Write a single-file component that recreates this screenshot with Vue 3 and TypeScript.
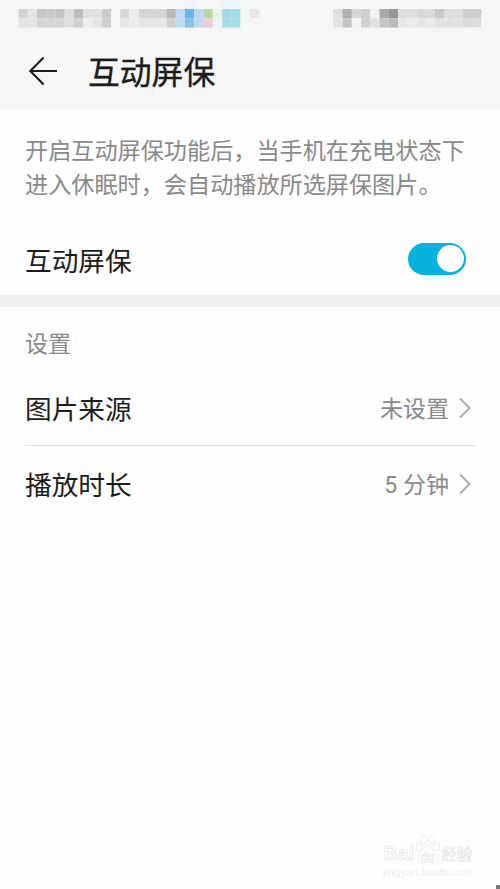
<script setup lang="ts">
import { ref } from 'vue'

interface Cell { x: number; y: number; color: string }
interface SettingRow { label: string; value: string }

const CELL = 9.25

function toCells(rows: string[], startX: number): Cell[] {
  return rows.flatMap((row, r) =>
    row.split(' ').map((color, c) => ({ x: startX + c * CELL, y: 9 + r * 9.25, color: '#' + color }))
  )
}

const cells: Cell[] = [
  ...toCells([
    'd5d5d5 e4e4e4 c7c7c7 cacaca c4c4c4 dedede bdbdbd e2e2e2 e0e0e0 cccccc f6f6f6 d8d8d8 eeeeee d6d6d6 d6d6d6 d6d6d6 bababa bddcf4 6bb2e9 b9d8f2 b9d5a8 e8f2e7 a2dde6 a2dde6 f4f5f5 e6e6e6',
    'e4e4e4 e4e4e4 d4d4d4 d4d4d4 d5d5d5 dedede d0d0d0 eeeeee e4e4e4 cecece f6f6f6 e7e7e7 ececec e5e5e5 e5e5e5 e5e5e5 cfcfcf c0dcf5 89c3e2 bfd7f3 edccd5 ecf4f5 a3dfe7 a3dfe7 f6f6f6 f6f6f6'
  ], 18.5),
  ...toCells([
    'dfdfdf b0b0b0 d7d7d7 cfcfcf f2f2f2 a9a9a9 969696 dedede dfdfdf d8d8d8 dbdbdb c9c9c9 dedede dedede cecece cecece',
    'e2e2e2 c6c6c6 f3f3f3 d1d1d1 e1e1e1 c5c5c5 bbbbbb e7e7e7 ebebeb e5e5e5 ebebeb e0e0e0 e1e1e1 e4e4e4 dcdcdc dcdcdc'
  ], 333.3)
]

const enabled = ref(true)
const settings: SettingRow[] = [
  { label: '图片来源', value: '未设置' },
  { label: '播放时长', value: '5 分钟' }
]
</script>

<template>
  <main class="screen">
    <header class="header">
      <svg class="status" width="500" height="36" viewBox="0 0 500 36">
        <rect x="185" y="0" width="9.25" height="9" fill="#eff4f8" />
        <rect x="222" y="0" width="18.5" height="9" fill="#eef5f7" />
        <rect v-for="(c, i) in cells" :key="i" :x="c.x" :y="c.y" width="9.3" height="9.3" :fill="c.color" />
      </svg>
      <div class="titlebar">
        <svg class="back" width="30" height="30" viewBox="0 0 30 30">
          <path d="M15.6 1.6 2.3 15 15.6 28.4M2.3 15H29" />
        </svg>
        <h1>互动屏保</h1>
      </div>
    </header>

    <section class="intro">
      <p>开启互动屏保功能后，当手机在充电状态下<br>进入休眠时，会自动播放所选屏保图片。</p>
      <div class="row switch-row">
        <span class="label">互动屏保</span>
        <button class="toggle" :class="{ on: enabled }" role="switch" :aria-checked="enabled" @click="enabled = !enabled">
          <span class="knob"></span>
        </button>
      </div>
    </section>

    <section class="settings">
      <h2>设置</h2>
      <div v-for="s in settings" :key="s.label" class="row setting">
        <span class="label">{{ s.label }}</span>
        <span class="value">{{ s.value }}</span>
        <svg class="chevron" width="12" height="22" viewBox="0 0 12 22">
          <path d="M1 1.5 10.5 11 1 20.5" />
        </svg>
      </div>
    </section>

    <div class="watermark">
      <div class="brand">
        <span>Bai</span>
        <svg width="25" height="31" viewBox="0 0 25 31">
          <ellipse cx="4" cy="13" rx="3" ry="4" />
          <ellipse cx="9" cy="5.5" rx="3" ry="4.3" />
          <ellipse cx="16.5" cy="5.5" rx="3" ry="4.3" />
          <ellipse cx="21.5" cy="13" rx="3" ry="4" />
          <path d="M12.5 12C9 12 8 16 5 18.5C1 22 2 29 7 29C9 29 11 28 13 28S17 29 19 29C24 28 24 22 20.5 19C17 16 16 12 12.5 12Z" />
          <text x="5.2" y="26.5">du</text>
        </svg>
        <span class="cn">经验</span>
      </div>
      <div class="site">jingyan.baidu.com</div>
    </div>
    <i class="corner"></i>
  </main>
</template>

<style>
body { margin: 0; background: #fefefe; }
</style>

<style scoped>
.screen {
  position: relative;
  width: 500px;
  height: 889px;
  overflow: hidden;
  background: #fefefe;
  color: #1c1c1c;
  font-family: Roboto, "Noto Sans CJK SC", sans-serif;
}
.header { height: 108.5px; background: #f6f6f6; }
.status { display: block; }
.titlebar { display: flex; align-items: center; height: 70px; padding-left: 28px; }
.back { margin-right: 30px; }
.back path { fill: none; stroke: #1c1c1c; stroke-width: 2.1; }
h1 {
  margin: 0;
  padding-top: 4px;
  font-size: 31.8px;
  line-height: 44px;
  font-weight: 400;
  -webkit-text-stroke: 0.35px #1c1c1c;
}
.intro { height: 186.5px; box-sizing: border-box; padding: 26px 0 0 25px; }
p { margin: 0; font-size: 23.15px; line-height: 34px; color: #898989; white-space: nowrap; }
.row { display: flex; align-items: center; }
.label { font-size: 26.7px; line-height: 36px; }
.switch-row { justify-content: space-between; height: 76px; margin-top: 18.5px; padding: 5px 34px 0 0; box-sizing: border-box; }
.toggle {
  display: flex;
  box-sizing: border-box;
  width: 58px;
  height: 32px;
  margin-top: -6px;
  padding: 2.5px;
  border: 0;
  border-radius: 16px;
  background: #c8c8c8;
}
.toggle.on { justify-content: flex-end; background: #06b1de; }
.knob { width: 27px; height: 27px; border-radius: 50%; background: #fefefe; }
.settings { padding-left: 25px; border-top: 12px solid #f0f0f0; }
h2 { margin: 0; padding-top: 20px; font-size: 23px; line-height: 36px; font-weight: 400; color: #898989; }
.setting { box-sizing: border-box; height: 75px; margin-right: 25px; padding: 4px 4px 0 0; }
h2 + .setting { height: 83px; padding-top: 12px; border-bottom: 1px solid #dedede; }
.value { margin-left: auto; font-size: 23px; line-height: 34px; color: #898989; }
.chevron { margin: -4px 0 0 10px; }
.chevron path { fill: none; stroke: #aaa; stroke-width: 1.8; }
.watermark { position: absolute; left: 383px; top: 834px; width: 95px; color: #fefefe; }
.brand { display: flex; align-items: flex-end; height: 31px; font: bold 20px/23px "Liberation Sans", sans-serif; -webkit-text-stroke: 0.7px #e6e6e6; }
.brand svg { margin: 0 1px; fill: #fefefe; stroke: #e6e6e6; stroke-width: 0.8; }
.brand text { font: bold 12px "Liberation Sans", sans-serif; stroke-width: 0.6; -webkit-text-stroke: 0.6px #e6e6e6; }
.cn { font: 400 15.5px/23px "Noto Sans CJK SC", sans-serif; white-space: nowrap; }
.site { font: 11.2px/14px "Liberation Sans", sans-serif; color: #eee; }
.corner { position: absolute; right: 0; bottom: 0; width: 4px; height: 4px; background: #777; }
</style>
